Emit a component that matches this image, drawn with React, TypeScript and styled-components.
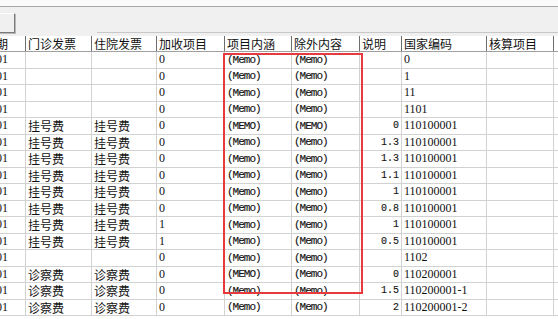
import React from 'react';
import styled, { createGlobalStyle } from 'styled-components';

type Kind = 'cjk' | 'num' | 'memo' | 'dec';

interface ICell {
  $w: number;
  $kind?: Kind;
  $right?: boolean;
}

const COLS = [68, 66, 65, 68, 67, 68, 42, 85, 67, 60];
const HEADERS = ['启用日期', '门诊发票', '住院发票', '加收项目', '项目内涵', '除外内容', '说明', '国家编码', '核算项目', ''];

const M = '(Memo)';
const MU = '(MEMO)';
const G = '挂号费';
const Z = '诊察费';
const D = '20120101';

// date, 门诊, 住院, 加收, 内涵, 除外, 说明, 编码
const ROWS: string[][] = [
  [D, '', '', '0', M, M, '', '0'],
  [D, '', '', '0', M, M, '', '1'],
  [D, '', '', '0', M, M, '', '11'],
  [D, '', '', '0', M, M, '', '1101'],
  [D, G, G, '0', MU, MU, '0', '110100001'],
  [D, G, G, '0', M, M, '1.3', '110100001'],
  [D, G, G, '0', M, M, '1.3', '110100001'],
  [D, G, G, '0', M, M, '1.1', '110100001'],
  [D, G, G, '0', M, M, '1', '110100001'],
  [D, G, G, '0', M, M, '0.8', '110100001'],
  [D, G, G, '1', M, M, '1', '110100001'],
  [D, G, G, '1', M, M, '0.5', '110100001'],
  [D, '', '', '0', M, M, '', '1102'],
  [D, Z, Z, '0', MU, M, '0', '110200001'],
  [D, Z, Z, '0', M, M, '1.5', '110200001-1'],
  [D, Z, Z, '0', M, M, '2', '110200001-2'],
];

const KINDS: Kind[] = ['num', 'cjk', 'cjk', 'num', 'memo', 'memo', 'dec', 'num', 'cjk', 'cjk'];

const GlobalStyle = createGlobalStyle`
  html, body {
    margin: 0;
    padding: 0;
    background: #ffffff;
  }
  * {
    box-sizing: border-box;
  }
`;

const fontFor = (kind?: Kind) => {
  switch (kind) {
    case 'memo':
      return `font-family: "Liberation Mono", monospace; font-size: 11px; letter-spacing: -1px; -webkit-text-stroke: 0.12px #111;`;
    case 'dec':
      return `font-family: "Liberation Mono", monospace; font-size: 10px; -webkit-text-stroke: 0.1px #111;`;
    case 'num':
      return `font-family: "Liberation Serif", serif; font-size: 12px;`;
    default:
      return `font-family: "Noto Sans CJK SC", sans-serif; font-size: 12px;`;
  }
};

const App = () => {
  return (
    <>
      <GlobalStyle />
      <Root>
        <TopStrip />
        <Toolbar>
          <ToolButton />
          <ToolSpacer />
          <ToolRule />
        </Toolbar>
        <Grid>
          <HeaderRow>
            {HEADERS.map((h, i) => (
              <HeaderCell key={i} $w={COLS[i]}>
                {h}
              </HeaderCell>
            ))}
          </HeaderRow>
          {ROWS.map((row, r) => (
            <Row key={r}>
              {COLS.map((w, i) => (
                <Cell key={i} $w={w} $kind={KINDS[i]} $right={i === 6}>
                  {row[i] || ''}
                </Cell>
              ))}
            </Row>
          ))}
        </Grid>
        <Highlight />
      </Root>
    </>
  );
};

const Root = styled.div`
  position: relative;
  width: 558px;
  height: 319px;
  overflow: hidden;
  background: #ffffff;
`;

const TopStrip = styled.div`
  height: 7px;
  background: #fafafa;
  border-bottom: 1px solid #a8a8a8;
`;

const Toolbar = styled.div`
  display: flex;
  align-items: flex-start;
  height: 29px;
  background: #f0f0f0;
`;

const ToolButton = styled.div`
  margin-top: 6px;
  margin-left: -10px;
  width: 25px;
  height: 20px;
  background: #f0f0f0;
  border: 1px solid #ffffff;
  border-right-color: #7a7a7a;
  border-bottom-color: #7a7a7a;
  box-shadow: 1px 1px 0 #b8b8b8;
`;

const ToolSpacer = styled.div`
  width: 82px;
`;

const ToolRule = styled.div`
  flex: 1;
  align-self: flex-end;
  margin-bottom: 3px;
  height: 1px;
  background: #c8c8c8;
`;

const Grid = styled.div`
  margin-left: -42px;
  width: 660px;
`;

const Row = styled.div`
  display: flex;
  height: 16.5px;
`;

const HeaderRow = styled.div`
  display: flex;
  height: 16px;
  background: #ffffff;
  border-bottom: 1px solid #a0a0a0;
`;

const HeaderCell = styled.div<ICell>`
  flex: 0 0 ${(p) => p.$w}px;
  display: flex;
  align-items: center;
  padding: 0 2px;
  border-right: 1px solid #6e6e6e;
  font-family: "Noto Sans CJK SC", sans-serif;
  font-size: 12px;
  color: #111111;
  white-space: nowrap;
  overflow: hidden;
`;

const Cell = styled.div<ICell>`
  flex: 0 0 ${(p) => p.$w}px;
  display: flex;
  align-items: center;
  justify-content: ${(p) => (p.$right ? 'flex-end' : 'flex-start')};
  padding: 0 2px;
  border-right: 1px solid #d2d2d2;
  border-bottom: 1px solid #d2d2d2;
  ${(p) => fontFor(p.$kind)}
  color: #111111;
  white-space: nowrap;
  overflow: hidden;
`;

const Highlight = styled.div`
  position: absolute;
  left: 223px;
  top: 53px;
  width: 140px;
  height: 241px;
  border: 2px solid #e83a3e;
  pointer-events: none;
`;

export default App;
